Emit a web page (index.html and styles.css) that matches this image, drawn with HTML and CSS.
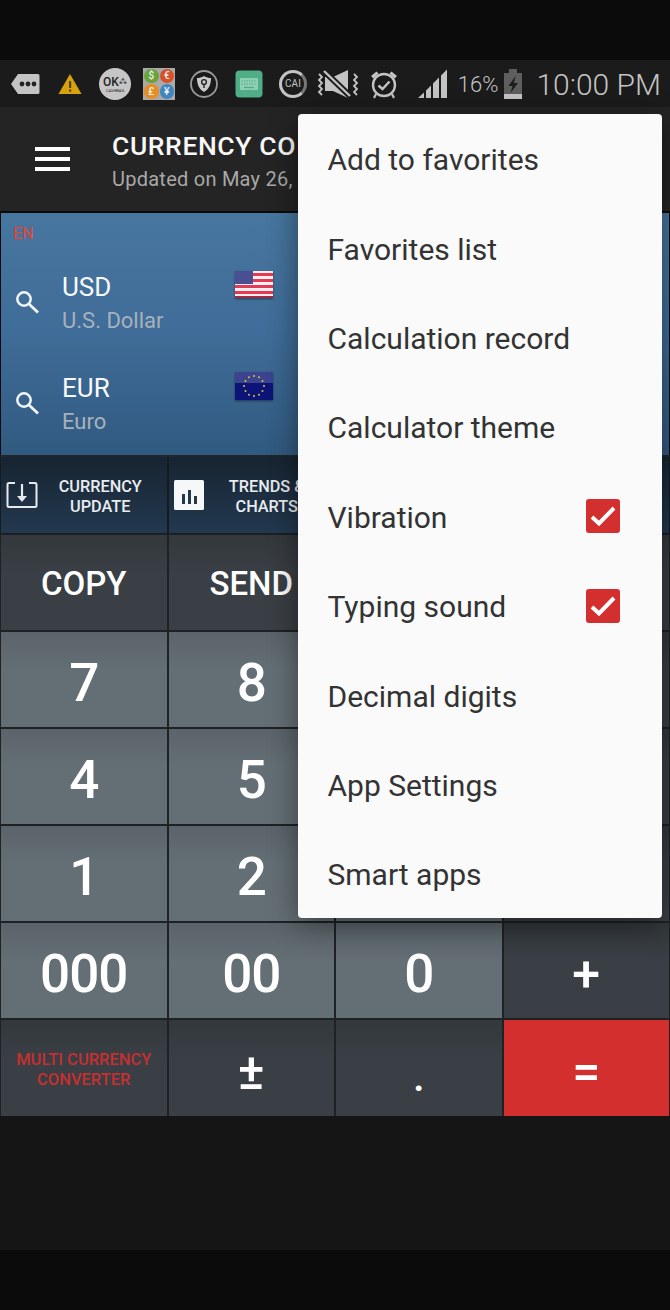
FILE: index.html
```html
<!DOCTYPE html>
<html lang="en">
<head>
<meta charset="utf-8">
<title>Currency Converter</title>
<link rel="stylesheet" href="styles.css">
</head>
<body>
<div class="screen">
  <div class="top-band"></div>
  <div class="status">
    <div class="status-left">
      <svg class="si" width="30" height="24" viewBox="0 0 30 24"><path d="M1 12 8 2h20a1.500 1.500 0 0 1 1.500 1.500v17A1.500 1.500 0 0 1 28 22H8z" fill="#c4c4c4"/><circle cx="12" cy="12" r="2.400" fill="#222"/><circle cx="18" cy="12" r="2.400" fill="#222"/><circle cx="24" cy="12" r="2.400" fill="#222"/></svg>
      <svg class="si" width="24" height="22" viewBox="0 0 24 22"><path d="M12 1 23.500 21H.5z" fill="#d8a20c"/><rect x="11" y="8" width="2.200" height="7" fill="#5a4200"/><rect x="11" y="16.500" width="2.200" height="2.200" fill="#5a4200"/></svg>
      <span class="ok"><span class="ok-main">OK<i>⁂</i></span><span class="ok-sub">CASHBAG</span></span>
      <span class="coins"><b class="c1">$</b><b class="c2">€</b><b class="c3">£</b><b class="c4">¥</b></span>
      <svg class="si" width="28" height="28" viewBox="0 0 28 28"><circle cx="14" cy="14" r="13" fill="#1a1a1a" stroke="#999" stroke-width="1.800"/><path d="M14 6c2.500 1.600 4.500 2 7 2 0 6-1.800 11-7 14-5.200-3-7-8-7-14 2.500 0 4.500-.4 7-2z" fill="#c9c9c9"/><circle cx="14" cy="12" r="2.400" fill="none" stroke="#222" stroke-width="1.400"/><path d="M14 14.500v3.500" stroke="#222" stroke-width="1.400"/></svg>
      <svg class="si" width="28" height="28" viewBox="0 0 28 28"><rect width="27" height="27" x=".5" y=".5" rx="4" fill="#4fae86"/><rect x="5" y="8" width="18" height="12" rx="1" fill="#8fd0b4"/><path d="M6.500 11h15M6.500 14h15" stroke="#4fae86" stroke-width="1" stroke-dasharray="1.500 1"/><path d="M9 17.500h10" stroke="#4fae86" stroke-width="1.400"/></svg>
      <span class="cai">CAI</span>
      <svg class="si" width="46" height="30" viewBox="0 0 46 30"><path d="M3 5 6 8 3 11 6 14 3 17 6 20 3 23 6 26" fill="none" stroke="#c4c4c4" stroke-width="1.800"/><path d="M9 8h8L32 1v28L17 22H9z" fill="#c4c4c4"/><path d="M8 2 34 27" stroke="#1b1b1b" stroke-width="6"/><path d="M8 2 34 27" stroke="#c4c4c4" stroke-width="2.400"/><path d="M38 5 41 8 38 11 41 14 38 17 41 20 38 23 41 26" fill="none" stroke="#c4c4c4" stroke-width="1.800"/></svg>
      <svg class="si" width="30" height="32" viewBox="0 0 30 32"><circle cx="14" cy="17" r="11" fill="none" stroke="#c4c4c4" stroke-width="2.400"/><path d="M8.500 17.500 12.500 21 19.500 13.500" fill="none" stroke="#c4c4c4" stroke-width="2.400"/><path d="M1 8 6.500 3.500 8.500 5.500 3.500 10.500zM27 8 21.500 3.500 19.500 5.500 24.500 10.500z" fill="#c4c4c4"/><path d="M6 26 4 30M22 26 24 30" stroke="#c4c4c4" stroke-width="2.200"/></svg>
    </div>
    <div class="status-right">
      <svg class="signal" width="30" height="32" viewBox="0 0 30 32"><path d="M0 30 6 24.500V30zM8 30V22.500L13 17.500V30zM15 30V15.500L21 9.500V30zM23 30V7.500L29 1.500V30z" fill="#c4c4c4"/></svg>
      <span class="pct">16%</span>
      <svg class="batt" width="20" height="32" viewBox="0 0 20 32"><path d="M6 1h8v4h5v26H1V5h5z" fill="#5e5e5e"/><rect x="1" y="26" width="18" height="5" fill="#c4c4c4"/><path d="M12.500 8 5.500 18h4l-2 7 7.500-10h-4z" fill="#1d1d1d"/></svg>
      <span class="clock">10:00 PM</span>
    </div>
  </div>
  <header class="appbar">
    <div class="burger"><span></span><span></span><span></span></div>
    <div class="titles">
      <div class="title">CURRENCY CO</div>
      <div class="subtitle">Updated on May 26,</div>
    </div>
  </header>
  <section class="panel">
    <div class="lang">EN</div>
    <div class="cur">
      <svg class="search" width="28" height="28" viewBox="0 0 28 28"><circle cx="11" cy="11" r="6.700" fill="none" stroke="#f2f5f8" stroke-width="2.500"/><path d="M16 16 25 24.500" stroke="#f2f5f8" stroke-width="2.800"/></svg>
      <div class="cur-text"><div class="code">USD</div><div class="name">U.S. Dollar</div></div>
      <svg class="flag" width="38" height="27" viewBox="0 0 38 27"><rect width="38" height="27" fill="#f4f0f2"/><path d="M0 2h38v3H0zM0 8h38v3H0zM0 14h38v3H0zM0 20h38v3H0z" fill="#e53a55"/><rect y="25" width="38" height="2" fill="#a42a42"/><rect width="18" height="13" fill="#4a4f94"/></svg>
    </div>
    <div class="cur">
      <svg class="search" width="28" height="28" viewBox="0 0 28 28"><circle cx="11" cy="11" r="6.700" fill="none" stroke="#f2f5f8" stroke-width="2.500"/><path d="M16 16 25 24.500" stroke="#f2f5f8" stroke-width="2.800"/></svg>
      <div class="cur-text"><div class="code">EUR</div><div class="name">Euro</div></div>
      <svg class="flag" width="38" height="28" viewBox="0 0 38 28"><rect width="38" height="28" fill="#0c1478"/><rect width="38" height="11" fill="#3c4490"/><g fill="#d8c23c"><circle cx="19" cy="4" r="1"/><circle cx="24" cy="5.300" r="1"/><circle cx="27.500" cy="9" r="1"/><circle cx="29" cy="14" r="1"/><circle cx="27.500" cy="19" r="1"/><circle cx="24" cy="22.700" r="1"/><circle cx="19" cy="24" r="1"/><circle cx="14" cy="22.700" r="1"/><circle cx="10.500" cy="19" r="1"/><circle cx="9" cy="14" r="1"/><circle cx="10.500" cy="9" r="1"/><circle cx="14" cy="5.300" r="1"/></g></svg>
    </div>
  </section>
  <section class="tools">
    <div class="tool">
      <svg width="32" height="28" viewBox="0 0 32 28"><path d="M9 2H3a1.500 1.500 0 0 0-1.500 1.500v21A1.500 1.500 0 0 0 3 26h26a1.500 1.500 0 0 0 1.500-1.500v-21A1.500 1.500 0 0 0 29 2h-6" fill="none" stroke="#e6eaee" stroke-width="2"/><path d="M16 3v14" stroke="#e6eaee" stroke-width="2.200"/><path d="M11 15h10l-5 6z" fill="#e6eaee"/></svg>
      <span class="tool-label">CURRENCY<br>UPDATE</span>
    </div>
    <div class="tool">
      <svg width="30" height="30" viewBox="0 0 30 30"><rect width="30" height="30" rx="1.500" fill="#f5f7f8"/><path d="M8 14h3v10H8zM14 10h3v14h-3zM20 16h3v8h-3z" fill="#24384c"/></svg>
      <span class="tool-label">TRENDS &amp;<br>CHARTS</span>
    </div>
    <div class="tool"></div>
    <div class="tool"></div>
  </section>
  <section class="keys">
    <div class="key dark word">COPY</div>
    <div class="key dark word">SEND</div>
    <div class="key dark"></div>
    <div class="key dark"></div>
    <div class="key">7</div>
    <div class="key">8</div>
    <div class="key"></div>
    <div class="key dark"></div>
    <div class="key">4</div>
    <div class="key">5</div>
    <div class="key"></div>
    <div class="key dark"></div>
    <div class="key">1</div>
    <div class="key">2</div>
    <div class="key"></div>
    <div class="key dark"></div>
    <div class="key">000</div>
    <div class="key">00</div>
    <div class="key">0</div>
    <div class="key dark op">+</div>
    <div class="key dark multi">MULTI CURRENCY<br>CONVERTER</div>
    <div class="key dark op">±</div>
    <div class="key dark op dot">.</div>
    <div class="key red op">=</div>
  </section>
  <div class="bottom-fill"></div>
  <div class="bottom-band"></div>
  <nav class="menu">
    <div class="item">Add to favorites</div>
    <div class="item">Favorites list</div>
    <div class="item">Calculation record</div>
    <div class="item">Calculator theme</div>
    <div class="item">Vibration<svg class="check" width="34" height="34" viewBox="0 0 34 34"><rect width="34" height="34" rx="3" fill="#d32f2f"/><path d="M6 18 13 24.500 28 9" fill="none" stroke="#fff" stroke-width="4"/></svg></div>
    <div class="item">Typing sound<svg class="check" width="34" height="34" viewBox="0 0 34 34"><rect width="34" height="34" rx="3" fill="#d32f2f"/><path d="M6 18 13 24.500 28 9" fill="none" stroke="#fff" stroke-width="4"/></svg></div>
    <div class="item">Decimal digits</div>
    <div class="item">App Settings</div>
    <div class="item">Smart apps</div>
  </nav>
</div>
</body>
</html>
```

FILE: styles.css
```css
* { box-sizing: border-box; }
html, body { margin: 0; padding: 0; }
body { background: #0a0a0a; font-family: Roboto, "Liberation Sans", sans-serif; color: #fff; }
.screen { position: relative; width: 670px; height: 1310px; overflow: hidden; display: flex; flex-direction: column; background: #0a0a0a; }
.top-band { height: 60px; flex: none; background: #0b0b0b; }

.status { height: 47px; flex: none; background: #1b1b1b; display: flex; align-items: center; justify-content: space-between; padding: 0 9px 0 10px; color: #c4c4c4; }
.status-left { display: flex; align-items: center; }
.si { flex: none; display: block; }
.status-left > *:nth-child(1) { margin-right: 18px; }
.status-left > *:nth-child(2) { margin-right: 17px; }
.status-left > *:nth-child(3) { margin-right: 12px; }
.status-left > *:nth-child(4) { margin-right: 15px; }
.status-left > *:nth-child(5) { margin-right: 17px; }
.status-left > *:nth-child(6) { margin-right: 16px; }
.status-left > *:nth-child(7) { margin-right: 9px; }
.status-left > *:nth-child(8) { margin-right: 8px; }
.ok { width: 32px; height: 32px; border-radius: 50%; background: #c6c6c6; color: #222; display: flex; flex-direction: column; align-items: center; justify-content: center; flex: none; }
.ok-main { font-size: 12px; font-weight: 500; line-height: 12px; white-space: nowrap; }
.ok-main i { font-size: 7px; font-style: normal; vertical-align: 3px; }
.ok-sub { font-size: 4px; line-height: 5px; }
.coins { width: 32px; height: 32px; background: #aaa; padding: 1px; display: grid; grid-template-columns: 1fr 1fr; grid-template-rows: 1fr 1fr; gap: 1px; flex: none; }
.coins b { border-radius: 50%; color: #eee; font-size: 10px; font-weight: 500; display: flex; align-items: center; justify-content: center; }
.c1 { background: #6aa33a; }
.c2 { background: #d8502a; }
.c3 { background: #e58e24; }
.c4 { background: #3f86c0; }
.cai { width: 28px; height: 28px; border-radius: 50%; border: 3px solid #c4c4c4; border-right-color: #777; background: #1c1c1c; color: #c4c4c4; font-size: 10px; display: flex; align-items: center; justify-content: center; flex: none; }
.status-right { display: flex; align-items: center; }
.signal { margin-right: 10px; }
.pct { font-size: 22px; font-weight: 300; margin-right: 5px; padding-top: 2px; }
.batt { margin-right: 13px; }
.clock { font-size: 30px; font-weight: 300; white-space: nowrap; padding-top: 2px; }

.appbar { height: 104px; flex: none; background: #242424; display: flex; align-items: center; padding: 0 0 1px 35px; }
.burger { width: 35px; display: flex; flex-direction: column; gap: 6px; margin-right: 42px; flex: none; }
.burger span { height: 4px; background: #fff; display: block; }
.titles { white-space: nowrap; padding-top: 8px; width: 186px; overflow: hidden; }
.title { font-size: 26.500px; font-weight: 500; line-height: 30px; color: #f8f8f8; letter-spacing: .6px; }
.subtitle { font-size: 20px; line-height: 30px; margin-top: 3px; color: #a8a8a8; letter-spacing: .25px; }

.panel { height: 242px; flex: none; margin: 2px 1px 0; background: linear-gradient(#47769f 0%, #3f6c98 50%, #315a80 100%); padding: 11px 0 0 12px; }
.lang { font-size: 16px; line-height: 20px; color: #e94336; }
.cur { display: flex; align-items: flex-start; height: 101px; padding-top: 27px; }
.search { margin-top: 17px; margin-right: 21px; flex: none; }
.cur-text { width: 173px; flex: none; }
.code { font-size: 26px; line-height: 32px; color: #f7f9fb; }
.name { font-size: 22px; line-height: 36px; color: #a7b2bd; }
.flag { flex: none; filter: drop-shadow(0 1px 1px rgba(0,0,0,.45)); }

.tools { height: 79px; flex: none; display: grid; grid-template-columns: repeat(4, 1fr); background: #161b20; border-top: 2px solid #20262c; border-bottom: 1px solid #1a1c1f; padding: 0 1px; gap: 2px; }
.tool { background: linear-gradient(#172431, #233950); display: flex; align-items: center; padding-left: 5px; }
.tool svg { flex: none; }
.tool-label { flex: 1; text-align: center; font-size: 16.300px; font-weight: 500; line-height: 20px; color: #e9edf0; padding: 3px 4px 0 0; white-space: nowrap; }

.keys { height: 582px; flex: none; display: grid; grid-template-columns: repeat(4, 1fr); grid-template-rows: repeat(5, 95px) 96px; background: #1e2225; gap: 2px; padding: 1px 1px 0; }
.key { background: linear-gradient(#5a646a, #646f75 40%); display: flex; align-items: center; justify-content: center; font-size: 53px; font-weight: 500; letter-spacing: -1px; color: #fff; text-align: center; padding-top: 6px; }
.dark { background: linear-gradient(#33383c, #3a3f45 40%); }
.word { font-size: 33px; letter-spacing: 0; padding-top: 1px; }
.op { font-size: 50px; letter-spacing: 0; font-weight: 500; padding-top: 7px; }
.dot { padding-top: 16px; font-size: 42px; }
.multi { font-size: 16.500px; font-weight: 500; letter-spacing: 0; line-height: 20px; color: #c62f2f; white-space: nowrap; padding-top: 4px; }
.red { background: #d32f2f; }

.bottom-fill { flex: none; height: 134px; background: #151515; }
.bottom-band { flex: 1; background: #0b0b0b; }

.menu { position: absolute; left: 298px; top: 114px; width: 364px; height: 804px; background: #fafafa; border-radius: 4px; box-shadow: 0 6px 30px rgba(0,0,0,.45); padding-top: 1px; display: flex; flex-direction: column; z-index: 2; }
.item { flex: none; height: 89.400px; display: flex; align-items: center; justify-content: space-between; padding: 0 42px 0 29.500px; font-size: 30px; color: #333; }
.check { flex: none; margin-bottom: 2px; }
```
